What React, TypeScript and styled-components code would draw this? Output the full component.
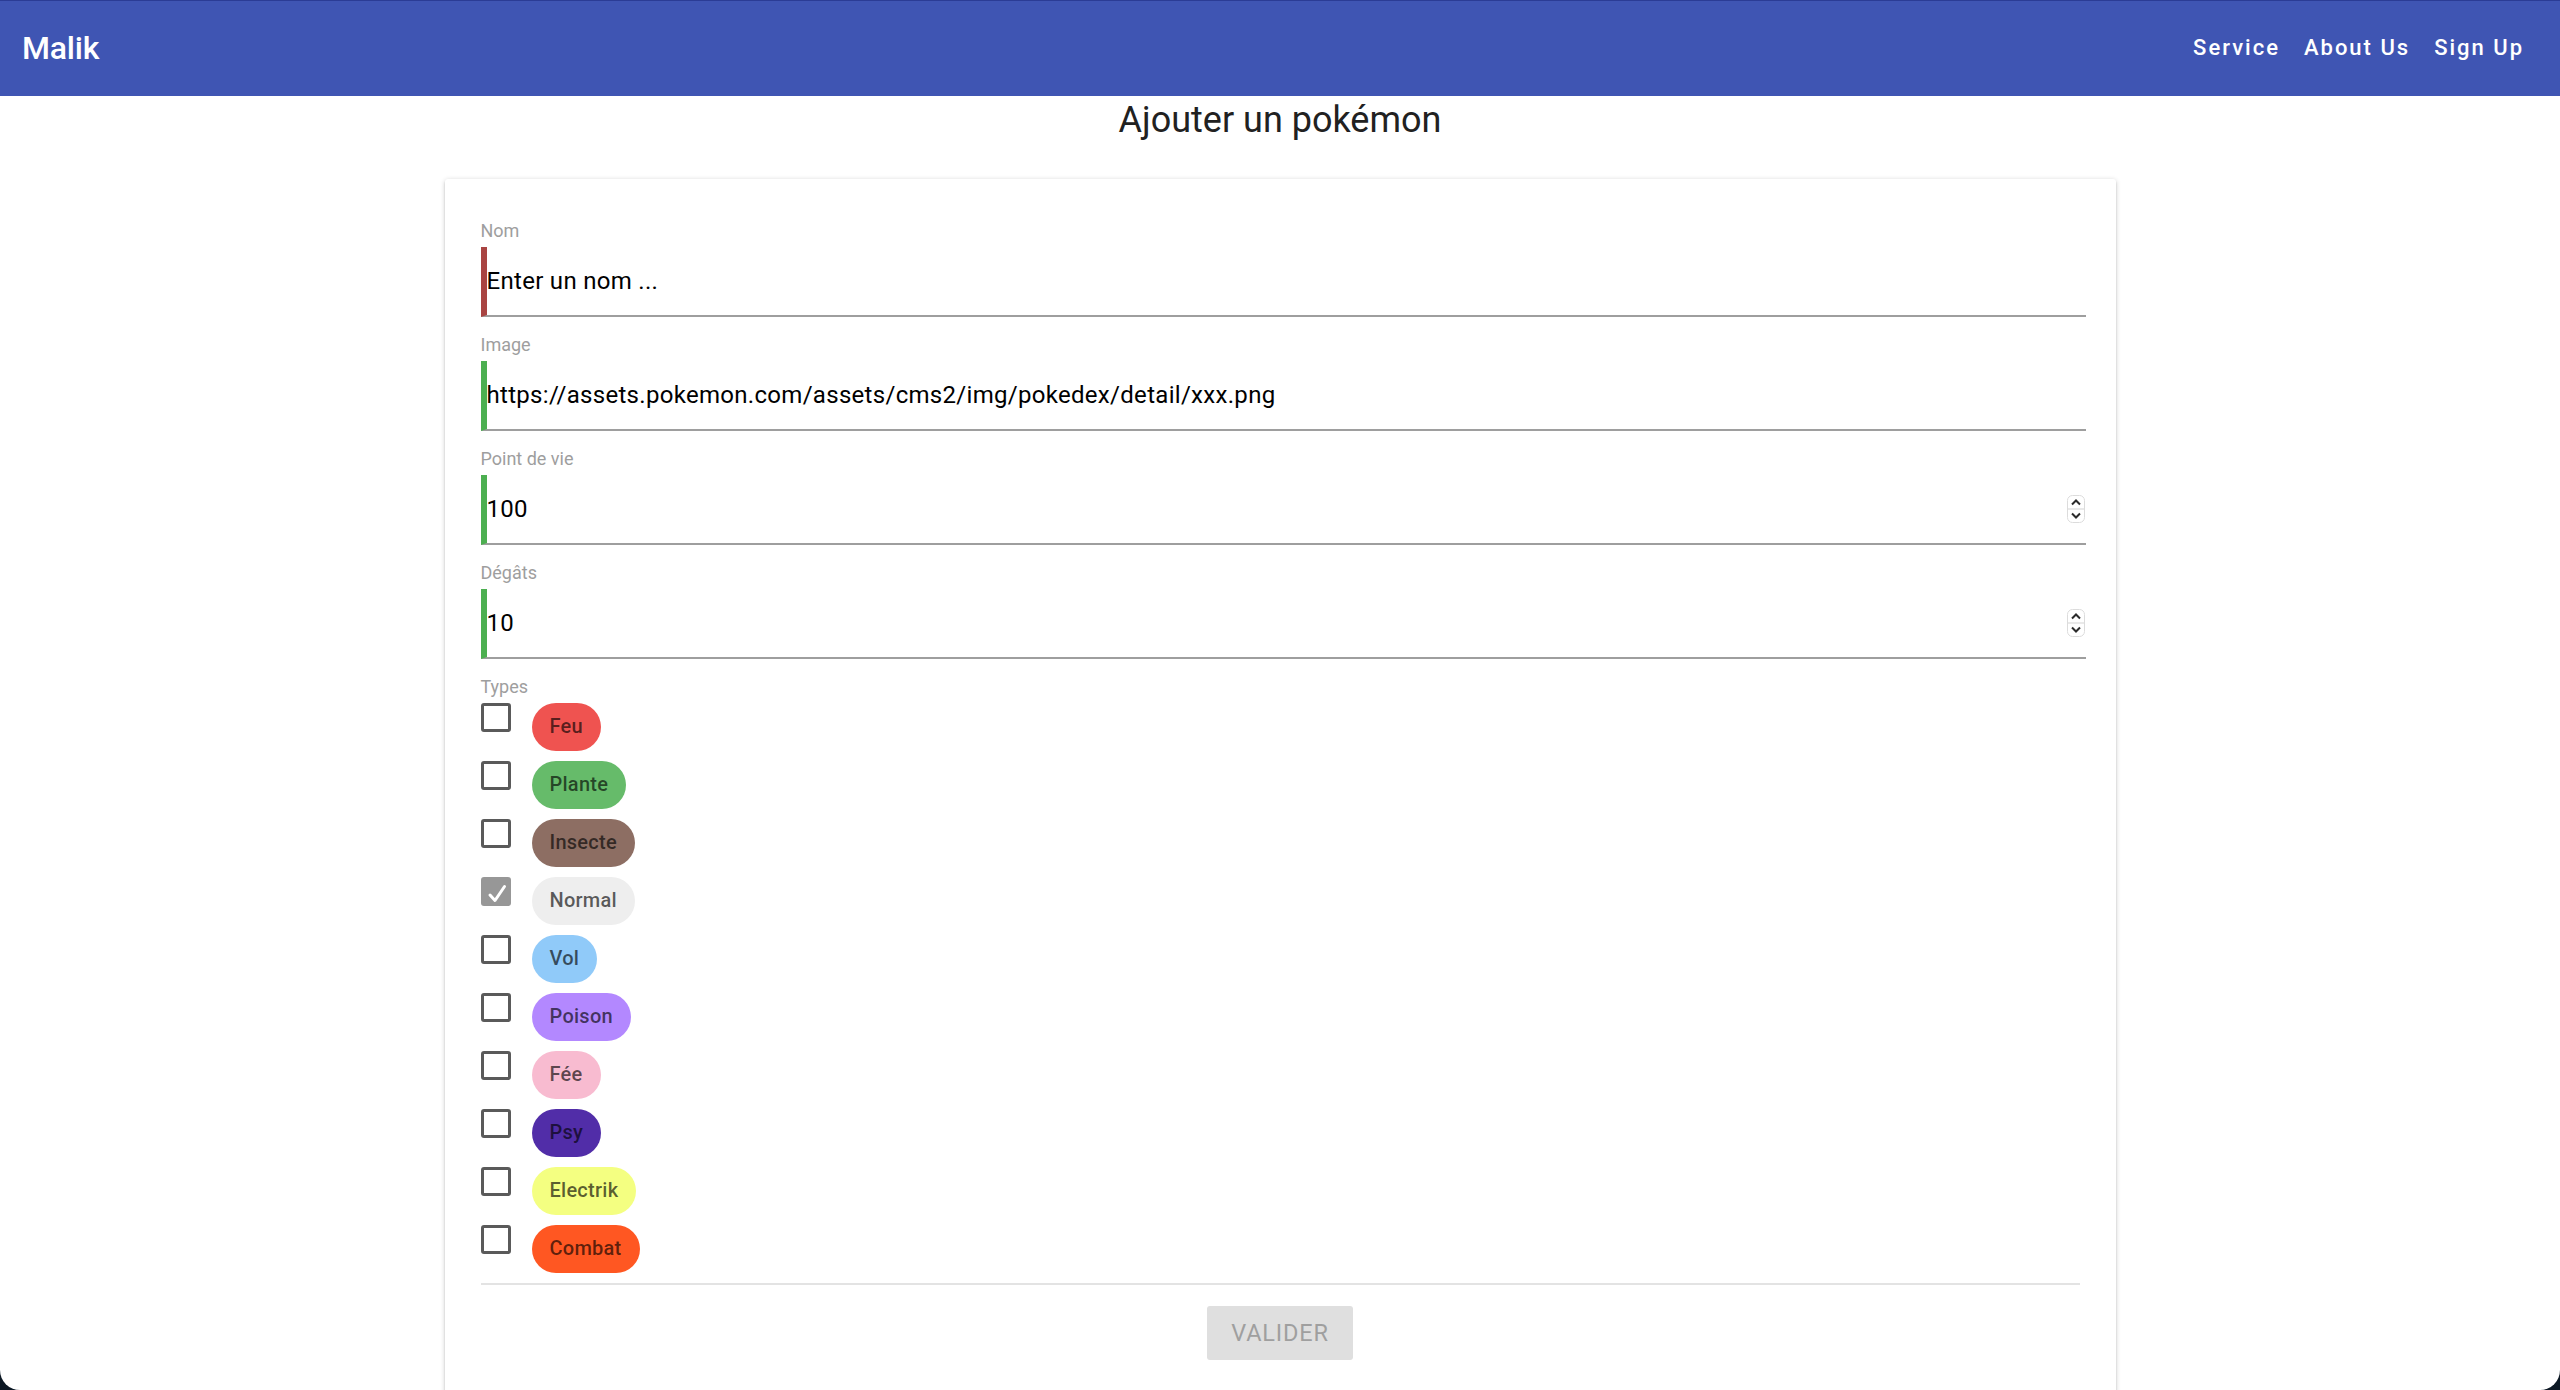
import React from "react";
import styled, { createGlobalStyle } from "styled-components";

const GlobalStyle = createGlobalStyle`
  html, body {
    margin: 0;
    padding: 0;
    background: #0c1824;
  }
  body {
    font-family: Roboto, "Noto Sans", Arial, sans-serif;
  }
  *, *::before, *::after {
    box-sizing: border-box;
  }
`;

const Window = styled.div`
  height: 1390px;
  background: #ffffff;
  border-radius: 0 0 20px 20px;
  overflow: hidden;
  display: flex;
  flex-direction: column;
`;

const NavBar = styled.nav`
  flex: none;
  height: 96px;
  background: #3f55b3;
  border-top: 1px solid #2b3c95;
  display: flex;
  align-items: center;
  justify-content: space-between;
  padding: 0 24px 2px 22px;
`;

const Brand = styled.a`
  color: #ffffff;
  font-size: 32px;
  font-weight: 500;
  letter-spacing: -0.2px;
  text-decoration: none;
`;

const NavLinks = styled.ul`
  display: flex;
  list-style: none;
  margin: 0;
  padding: 0;
`;

const NavLink = styled.a`
  display: block;
  padding: 0 12px;
  color: #ffffff;
  font-size: 22px;
  font-weight: 500;
  letter-spacing: 2px;
  text-decoration: none;
`;

const Main = styled.main`
  flex: 1;
  display: flex;
  flex-direction: column;
  align-items: center;
`;

const Title = styled.h4`
  margin: 3px 0 38px;
  font-size: 36px;
  line-height: 42px;
  font-weight: 400;
  color: #212121;
`;

const Card = styled.form`
  flex: none;
  width: 1671px;
  padding: 41px 36px 36px;
  background: #ffffff;
  border-radius: 3px;
  box-shadow: 0 2px 2px 0 rgba(0, 0, 0, 0.14), 0 3px 1px -2px rgba(0, 0, 0, 0.12),
    0 1px 5px 0 rgba(0, 0, 0, 0.2);
`;

const Field = styled.div`
  margin-bottom: 17px;
`;

const Label = styled.label`
  display: block;
  font-size: 18px;
  line-height: 22px;
  color: #9e9e9e;
  margin-bottom: 5px;
`;

const InputBox = styled.div<{ $accent: string }>`
  display: flex;
  align-items: center;
  justify-content: space-between;
  width: calc(100% + 6px);
  height: 70px;
  border-left: 6px solid ${(p) => p.$accent};
  border-bottom: 2px solid #9e9e9e;
  font-size: 24px;
  letter-spacing: 0.3px;
  color: #000000;
  padding-right: 1px;
`;

const TypeList = styled.div`
  display: flex;
  flex-direction: column;
  gap: 10px;
`;

const TypeRow = styled.div`
  display: flex;
  align-items: flex-start;
  gap: 21px;
  height: 48px;
`;

const CheckBox = styled.span<{ $checked?: boolean }>`
  display: flex;
  align-items: center;
  justify-content: center;
  width: 30px;
  height: 29px;
  border: 3px solid ${(p) => (p.$checked ? "#979797" : "#5a5a5a")};
  background: ${(p) => (p.$checked ? "#979797" : "#ffffff")};
  border-radius: 3px;
`;

const Chip = styled.span<{ $bg: string }>`
  display: inline-block;
  height: 48px;
  line-height: 47px;
  padding: 0 18px;
  border-radius: 24px;
  background: ${(p) => p.$bg};
  color: rgba(0, 0, 0, 0.64);
  font-size: 20px;
  font-weight: 500;
  letter-spacing: 0.25px;
`;

const Divider = styled.div`
  height: 2px;
  background: #e3e3e3;
  margin-top: 10px;
`;

const ButtonRow = styled.div`
  display: flex;
  justify-content: center;
  margin-top: 21px;
`;

const SubmitButton = styled.button`
  height: 54px;
  padding: 0 24px;
  border: none;
  border-radius: 3px;
  background: #dfdfdf;
  color: #9f9f9f;
  font-family: inherit;
  font-size: 23.5px;
  letter-spacing: 0.8px;
  text-transform: uppercase;
`;

const Spinner = () => (
  <svg width="18" height="28" viewBox="0 0 18 28">
    <rect x="0.5" y="0.5" width="17" height="27" rx="5" fill="#ffffff" stroke="#dcdcdc" />
    <line x1="1" y1="14" x2="17" y2="14" stroke="#e2e2e2" strokeWidth="1.5" />
    <polyline points="5,9.5 9,5.5 13,9.5" fill="none" stroke="#2b2b2b" strokeWidth="2" />
    <polyline points="5,18.5 9,22.5 13,18.5" fill="none" stroke="#2b2b2b" strokeWidth="2" />
  </svg>
);

const CheckMark = () => (
  <svg width="24" height="23" viewBox="3 3 24 23">
    <polyline
      points="9,18 14,23.5 23.5,9.5"
      fill="none"
      stroke="#ffffff"
      strokeWidth="3"
      strokeLinecap="round"
      strokeLinejoin="round"
    />
  </svg>
);

type FieldDef = { label: string; value: string; accent: string; number?: boolean };

const fields: FieldDef[] = [
  { label: "Nom", value: "Enter un nom ...", accent: "#a94442" },
  {
    label: "Image",
    value: "https://assets.pokemon.com/assets/cms2/img/pokedex/detail/xxx.png",
    accent: "#4caf50",
  },
  { label: "Point de vie", value: "100", accent: "#4caf50", number: true },
  { label: "Dégâts", value: "10", accent: "#4caf50", number: true },
];

const types = [
  { name: "Feu", color: "#ef5350" },
  { name: "Plante", color: "#66bb6a" },
  { name: "Insecte", color: "#8d6e63" },
  { name: "Normal", color: "#eeeeee", checked: true },
  { name: "Vol", color: "#90caf9" },
  { name: "Poison", color: "#b388ff" },
  { name: "Fée", color: "#f8bbd0" },
  { name: "Psy", color: "#512da8" },
  { name: "Electrik", color: "#f4ff81" },
  { name: "Combat", color: "#ff5722" },
];

export default function App() {
  return (
    <>
      <GlobalStyle />
      <Window>
        <NavBar>
          <Brand href="#">Malik</Brand>
          <NavLinks>
            <li>
              <NavLink href="#">Service</NavLink>
            </li>
            <li>
              <NavLink href="#">About Us</NavLink>
            </li>
            <li>
              <NavLink href="#">Sign Up</NavLink>
            </li>
          </NavLinks>
        </NavBar>
        <Main>
          <Title>Ajouter un pokémon</Title>
          <Card onSubmit={(e) => e.preventDefault()}>
            {fields.map((f) => (
              <Field key={f.label}>
                <Label>{f.label}</Label>
                <InputBox $accent={f.accent} role="textbox">
                  <span>{f.value}</span>
                  {f.number && <Spinner />}
                </InputBox>
              </Field>
            ))}
            <Label>Types</Label>
            <TypeList>
              {types.map((t) => (
                <TypeRow key={t.name}>
                  <CheckBox $checked={t.checked}>{t.checked && <CheckMark />}</CheckBox>
                  <Chip $bg={t.color}>{t.name}</Chip>
                </TypeRow>
              ))}
            </TypeList>
            <Divider />
            <ButtonRow>
              <SubmitButton type="submit" disabled>
                Valider
              </SubmitButton>
            </ButtonRow>
          </Card>
        </Main>
      </Window>
    </>
  );
}
